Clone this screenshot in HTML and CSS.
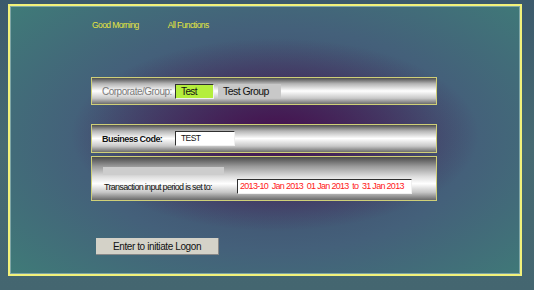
FILE: index.html
```html
<!DOCTYPE html>
<html lang="en">
<head>
  <meta charset="UTF-8" />
  <title>Logon</title>
  <link rel="stylesheet" href="styles.css">
</head>
<body>

  <div class="frame">
    <!-- top links -->
    <div class="nav">
      <a href="#" class="nav-link">Good Morning</a>
      <a href="#" class="nav-link">All Functions</a>
    </div>

    <div class="panel panel-corp">
      <span class="label label-muted">Corporate/Group:</span>
      <span class="field field-green">Test</span>
      <span class="group-name">Test Group</span>
    </div>

    <div class="panel panel-code">
      <span class="label label-bold">Business Code:</span>
      <span class="field field-white">TEST</span>
    </div>

    <div class="panel panel-period">
      <div class="blank-bar"></div>
      <div class="period-row">
        <span class="label">Transaction input period is set to:</span>
        <span class="field field-period">2013-10&nbsp; Jan 2013&nbsp; 01 Jan 2013&nbsp; to&nbsp; 31 Jan 2013</span>
      </div>
    </div>

    <button type="button" class="logon">Enter to initiate Logon</button>
  </div>

</body>
</html>
```

FILE: styles.css
```css
* {
  box-sizing: border-box;
}

html, body {
  height: 100%;
}

body {
  margin: 0;
  padding: 4px 12px 14px 8px;
  font-family: 'Liberation Sans', Arial, sans-serif;
  font-size: 10px;
  background: linear-gradient(180deg, #3c5a6c 0%, #466a72 50%, #446670 100%);
}

.frame {
  height: 272px;
  border: 2px solid #f2f27a;
  box-shadow: inset 0 0 0 1px #7fa6a6;
  background:
    radial-gradient(ellipse 40% 36% at 52% 48%, #46104e 0%, rgba(70, 16, 78, 0.6) 40%, rgba(70, 40, 90, 0) 100%),
    radial-gradient(ellipse 70% 75% at 52% 50%, #3e4468 0%, #44607a 55%, #3f7b78 100%);
  padding: 13px 0 0 81px;
  display: flex;
  flex-direction: column;
  align-items: flex-start;
}

.nav {
  display: flex;
  gap: 29px;
  height: 12px;
  margin-left: 1px;
}

.nav-link {
  color: #e6e640;
  text-decoration: none;
  line-height: 12px;
  font-size: 8.5px;
  letter-spacing: -0.6px;
}

.panel {
  width: 346px;
  border: 1px solid #cfcf78;
  background: linear-gradient(180deg, #4e4e4e 0%, #b4b4b4 22%, #ffffff 50%, #c8c8c8 78%, #6c6c6c 100%);
  display: flex;
  align-items: center;
  padding-left: 10px;
  color: #111;
}

.panel-corp {
  margin-top: 46px;
  height: 28px;
}

.panel-code {
  margin-top: 19px;
  height: 29px;
}

.panel-period {
  margin-top: 3px;
  height: 45px;
  flex-direction: column;
  align-items: flex-start;
  padding: 10px 0 0 11px;
  background: linear-gradient(180deg, #4a4a4a 0%, #9a9a9a 22%, #dcdcdc 45%, #ffffff 62%, #c6c6c6 82%, #6a6a6a 100%);
}

.label {
  flex-shrink: 0;
  width: 73px;
  white-space: nowrap;
}

.label-muted {
  color: #7a7a7a;
  font-size: 10px;
  letter-spacing: -0.5px;
}

.label-bold {
  font-weight: bold;
  font-size: 9px;
  letter-spacing: -0.55px;
}

.field {
  flex-shrink: 0;
  height: 15px;
  line-height: 13px;
  border-top: 1px solid #303030;
  border-left: 1px solid #303030;
  border-right: 1px solid #f0f0f0;
  border-bottom: 1px solid #f0f0f0;
  padding-left: 3px;
  white-space: nowrap;
}

.field-green {
  width: 39px;
  background: #b4ee3c;
  padding-left: 5px;
  font-size: 10px;
  letter-spacing: -0.6px;
}

.field-white {
  width: 60px;
  background: #ffffff;
  padding-left: 5px;
  font-size: 8.5px;
  letter-spacing: -0.6px;
}

.group-name {
  flex-shrink: 0;
  margin-left: 4px;
  width: 63px;
  height: 14px;
  line-height: 14px;
  background: #c8c8c8;
  padding-left: 5px;
  font-size: 10.5px;
  letter-spacing: -0.55px;
  white-space: nowrap;
}

.blank-bar {
  width: 121px;
  height: 8px;
  background: #cdcdcd;
}

.period-row {
  display: flex;
  align-items: center;
  margin-top: 4px;
}

.period-row .label {
  width: 134px;
  padding-left: 1px;
  font-size: 9px;
  letter-spacing: -0.7px;
}

.field-period {
  width: 175px;
  background: #ffffff;
  color: #ff2020;
  font-size: 9px;
  letter-spacing: -0.7px;
  padding-left: 2px;
}

.logon {
  margin-top: 37px;
  margin-left: 5px;
  width: 123px;
  height: 17px;
  padding: 0;
  border: none;
  border-right: 1px solid #888;
  border-bottom: 1px solid #888;
  background: #d4d2c8;
  font-family: 'Liberation Sans', Arial, sans-serif;
  font-size: 10px;
  color: #111;
  letter-spacing: -0.4px;
}
```
